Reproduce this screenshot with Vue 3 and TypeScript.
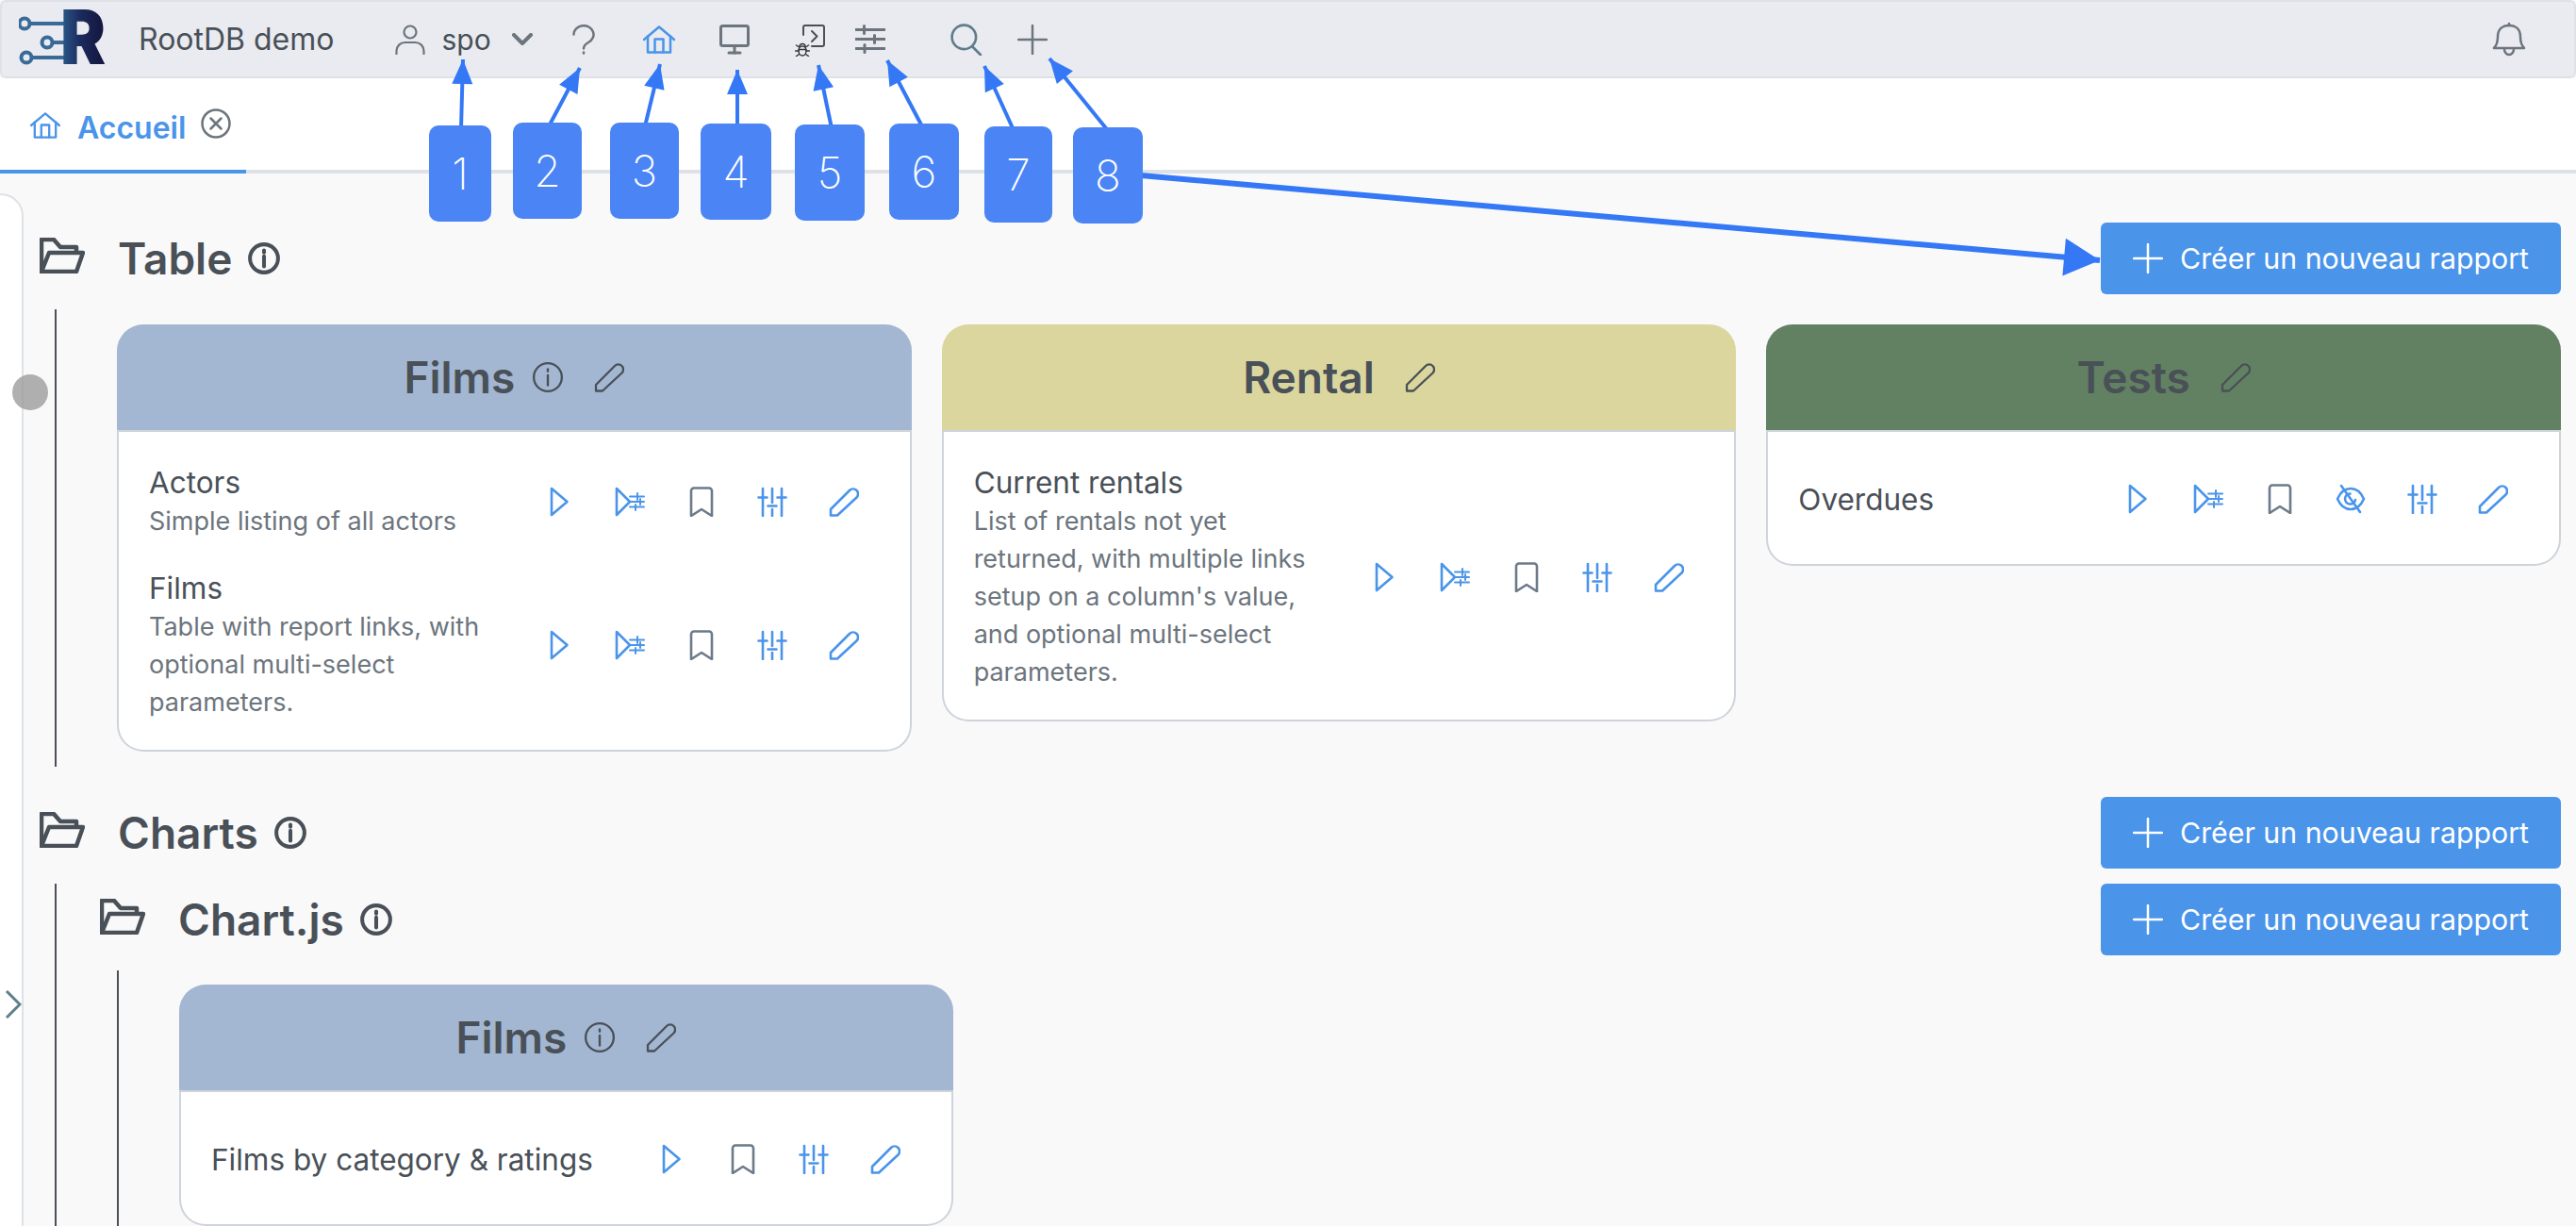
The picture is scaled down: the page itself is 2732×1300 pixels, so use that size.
<script setup lang="ts">
interface Report {
  name: string;
  desc?: string;
  actions: string[];
}

interface Card {
  title: string;
  tone: string;
  info?: boolean;
  reports: Report[];
}

interface Arrow {
  from: [number, number];
  to: [number, number];
  width: number;
  head: number;
  spread: number;
}

const base = ['play', 'run-params', 'bookmark', 'sliders', 'pencil'];

const tableCards: Card[] = [
  {
    title: 'Films',
    tone: 'blue',
    info: true,
    reports: [
      { name: 'Actors', desc: 'Simple listing of all actors', actions: base },
      { name: 'Films', desc: 'Table with report links, with optional multi-select parameters.', actions: base },
    ],
  },
  {
    title: 'Rental',
    tone: 'yellow',
    reports: [
      {
        name: 'Current rentals',
        desc: "List of rentals not yet returned, with multiple links setup on a column's value, and optional multi-select parameters.",
        actions: base,
      },
    ],
  },
  {
    title: 'Tests',
    tone: 'green',
    reports: [{ name: 'Overdues', actions: ['play', 'run-params', 'bookmark', 'eye-off', 'sliders', 'pencil'] }],
  },
];

const chartCards: Card[] = [
  {
    title: 'Films',
    tone: 'blue',
    info: true,
    reports: [{ name: 'Films by category & ratings', actions: ['play', 'bookmark', 'sliders', 'pencil'] }],
  },
];

const badges = [
  { n: 1, x: 455, y: 133, w: 66 },
  { n: 2, x: 544, y: 130, w: 73 },
  { n: 3, x: 647, y: 130, w: 73 },
  { n: 4, x: 743, y: 131, w: 75 },
  { n: 5, x: 843, y: 132, w: 74 },
  { n: 6, x: 943, y: 131, w: 74 },
  { n: 7, x: 1044, y: 134, w: 72 },
  { n: 8, x: 1138, y: 135, w: 74 },
];

const small = { width: 4, head: 26, spread: 11 };
const arrows: Arrow[] = [
  { from: [489, 136], to: [491, 63], ...small },
  { from: [582, 134], to: [615, 72], ...small },
  { from: [684, 134], to: [700, 68], ...small },
  { from: [782, 136], to: [782, 74], ...small },
  { from: [882, 136], to: [868, 69], ...small },
  { from: [979, 136], to: [941, 64], ...small },
  { from: [1075, 138], to: [1044, 70], ...small },
  { from: [1173, 136], to: [1113, 62], ...small },
  { from: [1210, 186], to: [2227, 276], width: 6, head: 38, spread: 20 },
];

const headPoints = (a: Arrow) => {
  const [x1, y1] = a.from;
  const [x2, y2] = a.to;
  const len = Math.hypot(x2 - x1, y2 - y1);
  const ux = (x2 - x1) / len;
  const uy = (y2 - y1) / len;
  const bx = x2 - ux * a.head;
  const by = y2 - uy * a.head;
  return `${x2},${y2} ${bx - uy * a.spread},${by + ux * a.spread} ${bx + uy * a.spread},${by - ux * a.spread}`;
};
</script>

<template>
  <div class="page">
    <svg class="sprite" width="0" height="0">
      <symbol id="person" viewBox="0 0 32 32">
        <circle cx="16" cy="8" r="6.5" />
        <path d="M1.5 31v-3a9 9 0 0 1 9-9h11a9 9 0 0 1 9 9v3" />
      </symbol>
      <symbol id="chevron" viewBox="0 0 24 14">
        <path d="M3 2l9 9 9-9" />
      </symbol>
      <symbol id="question" viewBox="0 0 24 32">
        <path d="M1.5 10.500a10.500 9.500 0 1 1 15.500 8.500c-3.500 2-5 3.500-5 6.500" />
        <path d="M12 29.500v1" />
      </symbol>
      <symbol id="home" viewBox="0 0 34 30">
        <path d="M1 15L17 1.500 33 15" />
        <path d="M5 11.500V28.500H29V11.500" />
        <path d="M12.500 28.500V14.500H21.500V28.500" />
      </symbol>
      <symbol id="monitor" viewBox="0 0 32 32">
        <rect x="1.500" y="1.500" width="29" height="21" rx="2" />
        <path d="M16 23v7" />
        <path d="M10 30h12" />
      </symbol>
      <symbol id="terminal" viewBox="0 0 32 32">
        <path d="M9 11V3a2 2 0 0 1 2-2h18a2 2 0 0 1 2 2v18a2 2 0 0 1-2 2h-11" />
        <path d="M18 7l5.500 5.500L18 18" />
      </symbol>
      <symbol id="bug" viewBox="0 0 16 16">
        <ellipse cx="8" cy="10" rx="4" ry="5" />
        <path d="M5 5.500a3 3 0 0 1 6 0" />
        <path d="M4 10H0.500M12 10h3.500M4.500 6L1.500 4M11.500 6l3-2M4.500 13.500L1.500 15.500M11.500 13.500l3 2M4 8.500h8" />
      </symbol>
      <symbol id="sliders-h" viewBox="0 0 32 32">
        <path d="M0 5.500h32M0 15.500h32M0 25.500h32" />
        <path d="M9.500 1.500v8M20.500 11.500v8M10 21.500v8" />
      </symbol>
      <symbol id="search" viewBox="0 0 32 32">
        <circle cx="13.500" cy="13.500" r="12" />
        <path d="M22 23l8 8" />
      </symbol>
      <symbol id="plus" viewBox="0 0 32 32">
        <path d="M16 1v30M1 16h30" />
      </symbol>
      <symbol id="bell" viewBox="0 0 40 36">
        <path d="M4 27c3-3 4-6 4-12C8 7 13 3 20 3s12 4 12 12c0 6 1 9 4 12z" />
        <path d="M15 28a5 6 0 0 0 10 0" />
        <path d="M20 3V1" />
      </symbol>
      <symbol id="close" viewBox="0 0 32 32">
        <circle cx="16" cy="16" r="14.500" />
        <path d="M10.500 10.500l11 11M21.500 10.500l-11 11" />
      </symbol>
      <symbol id="folder" viewBox="0 0 48 38">
        <path d="M2 36V2H15L22 10H39V15" />
        <path d="M2 36H39L46 16H10Z" />
      </symbol>
      <symbol id="info" viewBox="0 0 32 32">
        <circle cx="16" cy="16" r="14" />
        <path d="M16 14v10" />
        <path d="M16 8v2" />
      </symbol>
      <symbol id="play" viewBox="0 0 32 32">
        <path d="M8 2L24.500 16 8 30Z" />
      </symbol>
      <symbol id="run-params" viewBox="0 0 32 32">
        <path d="M2 2L16 16 2 30Z" />
        <path d="M16 10.500H31M16 16H31M16 21.500H31" stroke-width="2" />
        <path d="M24 7v7M27 13v6M22 19v6" stroke-width="2" />
      </symbol>
      <symbol id="bookmark" viewBox="0 0 32 32">
        <path d="M5 31V4.500a3 3 0 0 1 3-3H24a3 3 0 0 1 3 3V31L16 24Z" />
      </symbol>
      <symbol id="eye-off" viewBox="0 0 32 32">
        <path d="M2 16C6 7 11 5 16 5s10 2 14 11c-4 9-9 11-14 11S6 25 2 16Z" />
        <path d="M21 17a5.500 5.500 0 1 1-5.500-6.500" />
        <path d="M6 2l20 28" />
      </symbol>
      <symbol id="sliders" viewBox="0 0 32 32">
        <path d="M6 2V31M16 2V17M16 24V31M26 2V31" />
        <path d="M1.500 11.500H10.500M11.500 20.500H20.500M21.500 11.500H30.500" />
      </symbol>
      <symbol id="pencil" viewBox="0 0 32 32">
        <path d="M2 30.500V24L22 4a5.300 5.300 0 0 1 7.500 7.500L9 30.500Z" />
      </symbol>
    </svg>

    <header class="topbar">
      <div class="logo">
        <svg class="logo-wires" viewBox="0 0 100 62" width="100" height="62">
          <path d="M12 14H52M36 34H52M14 50H52" />
          <circle cx="6" cy="14" r="5.500" />
          <circle cx="30" cy="34" r="5.500" />
          <circle cx="8" cy="50" r="5.500" />
        </svg>
        <span class="logo-r">R</span>
      </div>
      <span class="brand">RootDB demo</span>
      <div class="user">
        <svg class="ico person"><use href="#person" /></svg>
        <span class="user-name">spo</span>
        <svg class="ico chevron"><use href="#chevron" /></svg>
      </div>
      <nav class="nav">
        <span class="nav-btn"><svg class="ico question"><use href="#question" /></svg></span>
        <span class="nav-btn"><svg class="ico home"><use href="#home" /></svg></span>
        <span class="nav-btn"><svg class="ico monitor"><use href="#monitor" /></svg></span>
        <span class="nav-btn">
          <span class="debug">
            <svg class="ico terminal"><use href="#terminal" /></svg>
            <svg class="ico bug"><use href="#bug" /></svg>
          </span>
        </span>
        <span class="nav-btn narrow"><svg class="ico sliders-h"><use href="#sliders-h" /></svg></span>
        <span class="nav-btn spaced"><svg class="ico search"><use href="#search" /></svg></span>
        <span class="nav-btn slim"><svg class="ico nav-plus"><use href="#plus" /></svg></span>
      </nav>
      <svg class="ico bell"><use href="#bell" /></svg>
    </header>

    <div class="tabs">
      <div class="tab">
        <svg class="ico tab-home"><use href="#home" /></svg>
        <span class="tab-label">Accueil</span>
        <svg class="ico tab-close"><use href="#close" /></svg>
      </div>
    </div>

    <div class="workspace">
      <aside class="strip">
        <span class="strip-handle"></span>
        <svg class="strip-toggle" viewBox="0 0 18 30" width="18" height="30">
          <path d="M2 1l14 14L2 29" />
        </svg>
      </aside>

      <main class="content">
        <div class="folder-row">
          <div class="folder-name">
            <svg class="ico folder"><use href="#folder" /></svg>
            <h2>Table</h2>
            <svg class="ico folder-info"><use href="#info" /></svg>
          </div>
          <button class="new-report">
            <svg class="ico btn-plus"><use href="#plus" /></svg>
            Créer un nouveau rapport
          </button>
        </div>
        <div class="children">
          <div class="card-grid">
            <article v-for="card in tableCards" :key="card.title" class="card">
              <div class="card-head" :class="card.tone">
                <h3>{{ card.title }}</h3>
                <svg v-if="card.info" class="ico head-info"><use href="#info" /></svg>
                <svg class="ico head-pencil"><use href="#pencil" /></svg>
              </div>
              <div class="card-body">
                <div v-for="report in card.reports" :key="report.name" class="report">
                  <div class="report-text">
                    <div class="report-name">{{ report.name }}</div>
                    <div v-if="report.desc" class="report-desc">{{ report.desc }}</div>
                  </div>
                  <div class="report-actions">
                    <span v-for="action in report.actions" :key="action" class="action">
                      <svg class="ico action-ico" :class="action"><use :href="'#' + action" /></svg>
                    </span>
                  </div>
                </div>
              </div>
            </article>
          </div>
        </div>

        <div class="folder-row next">
          <div class="folder-name">
            <svg class="ico folder"><use href="#folder" /></svg>
            <h2>Charts</h2>
            <svg class="ico folder-info"><use href="#info" /></svg>
          </div>
          <button class="new-report">
            <svg class="ico btn-plus"><use href="#plus" /></svg>
            Créer un nouveau rapport
          </button>
        </div>
        <div class="children flush">
          <div class="folder-row">
            <div class="folder-name">
              <svg class="ico folder"><use href="#folder" /></svg>
              <h2>Chart.js</h2>
              <svg class="ico folder-info"><use href="#info" /></svg>
            </div>
            <button class="new-report">
              <svg class="ico btn-plus"><use href="#plus" /></svg>
              Créer un nouveau rapport
            </button>
          </div>
          <div class="children nested">
            <div class="card-grid">
              <article v-for="card in chartCards" :key="card.title" class="card">
                <div class="card-head" :class="card.tone">
                  <h3>{{ card.title }}</h3>
                  <svg v-if="card.info" class="ico head-info"><use href="#info" /></svg>
                  <svg class="ico head-pencil"><use href="#pencil" /></svg>
                </div>
                <div class="card-body">
                  <div v-for="report in card.reports" :key="report.name" class="report">
                    <div class="report-text">
                      <div class="report-name">{{ report.name }}</div>
                    </div>
                    <div class="report-actions">
                      <span v-for="action in report.actions" :key="action" class="action">
                        <svg class="ico action-ico" :class="action"><use :href="'#' + action" /></svg>
                      </span>
                    </div>
                  </div>
                </div>
              </article>
            </div>
          </div>
        </div>
      </main>
    </div>

    <!-- annotations drawn over the screenshot -->
    <svg class="arrows" width="2732" height="1300">
      <g v-for="(a, i) in arrows" :key="i">
        <line :x1="a.from[0]" :y1="a.from[1]" :x2="a.to[0]" :y2="a.to[1]" :stroke-width="a.width" />
        <polygon :points="headPoints(a)" />
      </g>
    </svg>
    <div
      v-for="b in badges"
      :key="b.n"
      class="badge"
      :style="{ left: b.x + 'px', top: b.y + 'px', width: b.w + 'px' }"
    >
      {{ b.n }}
    </div>
  </div>
</template>

<style>
html,
body {
  margin: 0;
  overflow: hidden;
}
</style>

<style scoped>
.page {
  position: relative;
  width: 2732px;
  height: 1300px;
  overflow: hidden;
  display: flex;
  flex-direction: column;
  background: #f9f9fa;
  color: #495057;
  font-family: Inter, "Liberation Sans", sans-serif;
}

.sprite {
  position: absolute;
}

.ico {
  fill: none;
  stroke: currentColor;
  stroke-width: 2.5;
  stroke-linecap: round;
  stroke-linejoin: round;
  flex-shrink: 0;
}

/* top bar */
.topbar {
  display: flex;
  align-items: center;
  height: 83px;
  box-sizing: border-box;
  padding: 0 49px 0 18px;
  background: #e9ebf0;
  border: 2px solid #dee2e6;
  border-radius: 6px;
}

.logo {
  position: relative;
  width: 100px;
  height: 62px;
  flex-shrink: 0;
}

.logo-wires {
  display: block;
  fill: none;
  stroke: #3a6a98;
  stroke-width: 4;
}

.logo-r {
  position: absolute;
  left: 44px;
  top: -3px;
  font-size: 80px;
  line-height: 62px;
  font-weight: 900;
  background: linear-gradient(90deg, #2a5c8c, #1b2a5c 45%, #14143c);
  -webkit-background-clip: text;
  background-clip: text;
  color: transparent;
  transform: scaleX(0.9);
  transform-origin: left center;
}

.brand {
  margin-left: 27px;
  font-size: 32px;
  color: #495057;
}

.user {
  display: flex;
  align-items: center;
  margin-left: 65px;
  color: #495057;
}

.person {
  width: 32px;
  height: 32px;
  color: #6c757d;
  stroke-width: 2.2;
}

.user-name {
  margin-left: 17px;
  font-size: 30px;
}

.chevron {
  width: 24px;
  height: 14px;
  margin-left: 21px;
  color: #6c757d;
  stroke-width: 4;
}

.nav {
  display: flex;
  align-items: center;
  margin-left: 13px;
  color: #6c757d;
}

.nav-btn {
  display: flex;
  align-items: center;
  justify-content: center;
  width: 80px;
  height: 40px;
}

.nav-btn.narrow {
  width: 48px;
}

.nav-btn.spaced {
  margin-left: 38px;
}

.nav-btn.slim {
  width: 60px;
}

.question {
  width: 24px;
  height: 32px;
}

.home {
  width: 34px;
  height: 30px;
  color: #4a94ea;
}

.monitor {
  width: 34px;
  height: 32px;
  stroke-width: 3;
}

.debug {
  position: relative;
  display: block;
  width: 32px;
  height: 32px;
}

.terminal {
  display: block;
  width: 32px;
  height: 32px;
  stroke-width: 2;
  color: #495057;
}

.bug {
  position: absolute;
  left: 0;
  bottom: -2px;
  width: 16px;
  height: 16px;
  stroke-width: 1.5;
  color: #343a40;
}

.sliders-h {
  width: 32px;
  height: 32px;
  stroke-width: 3;
}

.search {
  width: 34px;
  height: 34px;
  color: #607d8b;
}

.nav-plus {
  width: 32px;
  height: 32px;
}

.bell {
  width: 40px;
  height: 36px;
  margin-left: auto;
  color: #6c757d;
}

/* tabs */
.tabs {
  height: 101px;
  box-sizing: border-box;
  background: #fff;
  border-bottom: 4px solid #dee2e6;
}

.tab {
  display: flex;
  align-items: center;
  width: 261px;
  height: 101px;
  box-sizing: border-box;
  padding: 2px 0 0 32px;
  border-bottom: 4px solid #4a94ea;
  color: #4a94ea;
}

.tab-home {
  width: 32px;
  height: 28px;
}

.tab-label {
  margin-left: 18px;
  margin-top: 6px;
  font-size: 32px;
  font-weight: 600;
}

.tab-close {
  width: 32px;
  height: 32px;
  margin-left: 16px;
  margin-top: -4px;
  color: #6c757d;
}

/* workspace */
.workspace {
  flex: 1;
  display: flex;
  min-height: 0;
}

.strip {
  position: relative;
  width: 25px;
  margin-top: 21px;
  box-sizing: border-box;
  background: #fff;
  border-right: 2px solid #dee2e6;
  border-top: 2px solid #dee2e6;
  border-top-right-radius: 24px;
  flex-shrink: 0;
}

.strip-handle {
  position: absolute;
  left: 13px;
  top: 190px;
  width: 38px;
  height: 38px;
  border-radius: 50%;
  background: rgba(150, 150, 150, 0.75);
}

.strip-toggle {
  position: absolute;
  left: 5px;
  top: 843px;
  fill: none;
  stroke: #607d8b;
  stroke-width: 3;
}

.content {
  flex: 1;
  min-width: 0;
  box-sizing: border-box;
  padding: 52px 16px 0 17px;
}

.folder-row {
  display: flex;
  align-items: center;
  justify-content: space-between;
}

.folder-row.next {
  margin-top: 32px;
}

.folder-name {
  display: flex;
  align-items: center;
}

.folder-name h2 {
  margin: 0 0 0 35px;
  font-size: 46px;
  font-weight: 600;
  line-height: 60px;
}

.folder {
  width: 48px;
  height: 38px;
  margin-bottom: 6px;
  stroke-width: 4.5;
  color: #495057;
}

.folder-info {
  width: 34px;
  height: 34px;
  margin-left: 17px;
  stroke-width: 3.8;
}

.new-report {
  display: flex;
  align-items: center;
  justify-content: center;
  width: 488px;
  height: 76px;
  padding: 0;
  border: 0;
  border-radius: 6px;
  background: #4a94ea;
  color: #fff;
  font-family: inherit;
  font-size: 30.300px;
  flex-shrink: 0;
}

.btn-plus {
  width: 32px;
  height: 32px;
  margin-right: 18px;
}

.children {
  margin-top: 16px;
  margin-left: 16px;
  padding: 16px 0 16px 46px;
  border-left: 2px solid #495057;
}

.children.flush {
  padding-top: 0;
}

.children.nested {
  margin-left: 18px;
  padding: 15px 0 16px 46px;
}

.card-grid {
  display: grid;
  grid-template-columns: repeat(3, 1fr);
  gap: 32px;
  margin-left: 18px;
  align-items: start;
}

/* cards */
.card-head {
  display: flex;
  align-items: center;
  justify-content: center;
  height: 114px;
  box-sizing: border-box;
  border-bottom: 2px solid #ced4da;
  border-radius: 28px 28px 0 0;
}

.card-head.blue {
  background: #a3b6d2;
}

.card-head.yellow {
  background: #dbd69e;
}

.card-head.green {
  background: #628162;
}

.card-head h3 {
  margin: 0;
  font-size: 46px;
  font-weight: 600;
}

.head-info {
  width: 34px;
  height: 34px;
  margin-left: 18px;
  stroke-width: 2.2;
}

.head-pencil {
  width: 32px;
  height: 32px;
  margin-left: 32px;
  stroke-width: 2.3;
}

.card-body {
  display: flex;
  flex-direction: column;
  gap: 29px;
  padding: 32px 32px 30px 32px;
  background: #fff;
  border: 2px solid #ced4da;
  border-top: 0;
  border-radius: 0 0 28px 28px;
}

.report {
  display: flex;
  align-items: center;
  min-height: 78px;
}

.report-text {
  flex: 1;
  min-width: 0;
  padding-right: 30px;
}

.report-name {
  font-size: 31.500px;
  line-height: 43px;
}

.report-desc {
  font-size: 27px;
  line-height: 40px;
  color: #6c757d;
}

.report-actions {
  display: flex;
  align-items: center;
  flex-shrink: 0;
  color: #4a94ea;
}

.action {
  display: flex;
  align-items: center;
  justify-content: center;
  width: 75.500px;
  height: 40px;
}

.action-ico {
  width: 32px;
  height: 32px;
  stroke-width: 2.6;
}

.action-ico.bookmark {
  color: #6c7a89;
}

/* annotations */
.arrows {
  position: absolute;
  left: 0;
  top: 0;
  pointer-events: none;
}

.arrows line {
  stroke: #3478f6;
}

.arrows polygon {
  fill: #3478f6;
}

.badge {
  position: absolute;
  display: flex;
  align-items: center;
  justify-content: center;
  height: 102px;
  border-radius: 10px;
  background: #4a84f5;
  color: #fff;
  font-size: 46px;
  font-weight: 200;
}
</style>
